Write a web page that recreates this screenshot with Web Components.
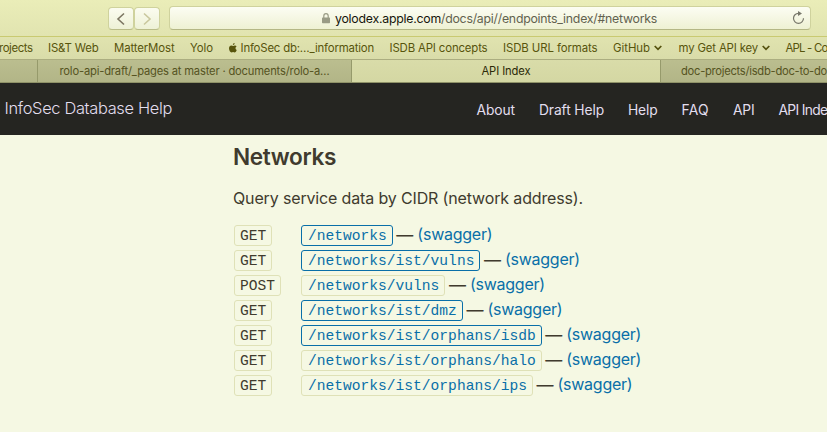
<!DOCTYPE html>
<html lang="en">
<head>
<meta charset="utf-8">
<title>API Index</title>
<style>
html,body{margin:0;height:100%;overflow:hidden;background:#f5f8e3;font-family:Inter,"Liberation Sans",sans-serif}
</style>
</head>
<body>
<help-window></help-window>
<script>
const define = (name, html, setup) => customElements.define(name, class extends HTMLElement {
  connectedCallback() {
    if (this.shadowRoot) return;
    this.attachShadow({ mode: 'open' }).innerHTML = typeof html === 'function' ? html(this) : html;
    if (setup) setup(this);
  }
});

/* Text run whose letter spacing is adjusted to fill the width given by "w". */
define('fit-text', '<style>:host{display:block;flex:none;white-space:pre}span{display:inline-block}</style><span><slot></slot></span>', el => {
  const span = el.shadowRoot.querySelector('span');
  const w = +el.getAttribute('w');
  const natural = span.getBoundingClientRect().width;
  span.style.letterSpacing = ((w - natural) / el.textContent.length) + 'px';
  el.style.width = w + 'px';
});

define('nav-button', el => `<style>
:host{display:flex;box-sizing:border-box;width:26px;height:23px;align-items:center;justify-content:center;border:1px solid #cfd29d;border-bottom-color:#b9bc88;border-radius:4px;background:linear-gradient(#fbfcf0,#eef1d6)}
</style><svg width="10" height="14" viewBox="0 0 10 14" fill="none" stroke="${el.hasAttribute('off') ? '#c9c79d' : '#7c7662'}" stroke-width="1.6"><path d="${el.hasAttribute('forward') ? 'M2 1.5 8 7 2 12.5' : 'M8 1.5 2 7 8 12.5'}"/></svg>`);

define('address-bar', `<style>
:host{display:flex;box-sizing:border-box;width:642px;height:24px;margin-left:9px;padding:0 5px 0 152px;align-items:center;border:1px solid #cfd29d;border-bottom-color:#b4b785;border-radius:4px;background:linear-gradient(#fcfdf3,#eef1d3);font-size:12.3px;color:#62624f;line-height:20px}
.host{color:#15150c}
.lock{margin-right:5px}
.reload{margin-left:auto}
fit-text{margin-top:1px}
</style>
<svg class="lock" width="8" height="11" viewBox="0 0 8 11"><path d="M1.8 5V3.1a2.2 2.4 0 0 1 4.4 0V5" fill="none" stroke="#999b85" stroke-width="1.2"/><rect y="4.6" width="8" height="5.7" rx=".7" fill="#999b85"/></svg>
<fit-text class="host" w="106">yolodex.apple.com</fit-text><fit-text w="216">/docs/api//endpoints_index/#networks</fit-text>
<svg class="reload" width="13" height="14" viewBox="0 0 13 14"><path d="M6.5 2.3A5 5 0 1 0 11.5 7.3" fill="none" stroke="#77776a" stroke-width="1.2"/><path d="M6 0v5l4-2.5z" fill="#77776a"/></svg>`);

define('tool-bar', `<style>
:host{display:flex;box-sizing:border-box;height:37px;padding:6px 0 0 108px;border-bottom:1px solid #c9ca71;background:linear-gradient(#eaedb8,#e1e4b0)}
nav-button{margin-top:1px}
</style><nav-button></nav-button><nav-button forward off></nav-button><address-bar></address-bar>`);

const chevron = '<svg width="8" height="6" viewBox="0 0 8 6" fill="none" stroke="#55520f" stroke-width="1.7"><path d="M.7 1 4 4.4 7.3 1"/></svg>';
define('bookmark-bar', `<style>
:host{display:flex;box-sizing:border-box;height:23px;align-items:center;gap:15.5px;padding-bottom:1px;overflow:hidden;border-bottom:1px solid #abad80;background:linear-gradient(#e0e3af,#d9dca9);font-size:11.4px;color:#57540c;line-height:20px}
div{display:flex;align-items:center;flex:none;gap:4px}
fit-text{padding-top:1px}
</style>
<fit-text w="33.5" style="margin-left:-1px">rojects</fit-text><fit-text w="50.5">IS&amp;T Web</fit-text><fit-text w="60.5">MatterMost</fit-text><fit-text w="23">Yolo</fit-text>
<div><svg width="8" height="10" viewBox="0 0 8 10" fill="#57540c"><path d="M5.6 0C4.5.1 3.8.9 3.9 2 5 2 5.7 1.1 5.6 0zM7.7 7.1C7.3 8.3 6.5 9.5 5.6 9.5 5 9.5 4.8 9.1 4.1 9.1S3.1 9.5 2.5 9.5C1.3 9.5 0 7.4 0 5.3 0 3.5 1.1 2.4 2.3 2.4 3.1 2.4 3.6 2.9 4.2 2.9 4.7 2.9 5.2 2.4 6 2.4 6.6 2.4 7.2 2.7 7.6 3.3 6 4.2 6.2 6.5 7.7 7.1z"/></svg><fit-text w="133.5">InfoSec db:…_information</fit-text></div>
<fit-text w="98">ISDB API concepts</fit-text><fit-text w="94.5">ISDB URL formats</fit-text>
<div><fit-text w="37">GitHub</fit-text>${chevron}</div><div style="margin-left:1px"><fit-text w="79.5">my Get API key</fit-text>${chevron}</div><fit-text w="42">APL - Co</fit-text>`);

define('tab-item', `<style>
:host{display:flex;box-sizing:border-box;justify-content:center;align-items:center;overflow:hidden;border-right:1px solid #969a6b;background:linear-gradient(#bbbe8f,#b2b587);color:#55531f}
:host([active]){background:linear-gradient(#d9dca9,#d4d7a3);color:#2c2a08}
:host([start]){justify-content:flex-start;padding-left:20px;border:0}
</style><slot></slot>`);
define('tab-strip', `<style>
:host{display:grid;box-sizing:border-box;grid-template-columns:38px 314px 309px 1fr;height:23px;border-bottom:1px solid #8f9268;font-size:11.2px;line-height:20px}
</style><tab-item></tab-item><tab-item><fit-text w="270">rolo-api-draft/_pages at master · documents/rolo-a…</fit-text></tab-item><tab-item active><fit-text w="49">API Index</fit-text></tab-item><tab-item start><fit-text w="146">doc-projects/isdb-doc-to-do</fit-text></tab-item>`);

define('site-header', `<style>
:host{display:flex;box-sizing:border-box;height:52px;padding-left:4.5px;background:#252521;color:#e2deee;overflow:hidden}
h1{margin:13px 304.5px 0 0;font-size:16.4px;font-weight:300;line-height:24px;flex:none}
nav{display:flex;gap:24px;margin-top:15px;font-size:13.8px;line-height:24px}
</style><h1><fit-text w="167.5">InfoSec Database Help</fit-text></h1>
<nav><fit-text w="38.5">About</fit-text><fit-text w="65">Draft Help</fit-text><fit-text w="29.5">Help</fit-text><fit-text w="27.5">FAQ</fit-text><fit-text w="21.5">API</fit-text><fit-text w="49">API Inde</fit-text></nav>`);

define('code-box', `<style>
:host{display:inline-flex;box-sizing:border-box;height:21px;align-items:center;padding:1px 5px 0;border:1px solid #dfe1b7;border-radius:3px;font:14.6px "Courier New","Liberation Mono",monospace;white-space:nowrap}
:host([link]){padding:1px 5px 0 6px;color:#096fa8}
:host([outlined]){border-color:#096fa8}
</style><slot></slot>`);

define('endpoint-row', el => `<style>
:host{display:grid;grid-template-columns:67px auto;height:25px;align-items:start;color:#403b2e}
.method,p{display:flex;margin:0}
a{color:#096fa8;font-size:16px;line-height:20px;margin-top:-1px}
i{font-style:normal;font-size:17px;line-height:20px;margin:0 3px 0 3.5px}
</style><span class="method"><code-box>${el.getAttribute('method')}</code-box></span>
<p><code-box link ${el.hasAttribute('outlined') ? 'outlined' : ''}>${el.getAttribute('path')}</code-box><i><fit-text w="18">—</fit-text></i><a><fit-text w="75">(swagger)</fit-text></a></p>`);

define('networks-section', `<style>
:host{display:block;padding:8px 0 0 233px;color:#403b2e}
h2{margin:0;font-size:22.6px;font-weight:600;line-height:28px}
.intro{margin:15px 0 14px;font-size:16px;line-height:25px}
section{padding-left:1px}
</style><h2><fit-text w="103">Networks</fit-text></h2><div class="intro"><fit-text w="350">Query service data by CIDR (network address).</fit-text></div>
<section>
<endpoint-row method="GET" path="/networks" outlined></endpoint-row>
<endpoint-row method="GET" path="/networks/ist/vulns" outlined></endpoint-row>
<endpoint-row method="POST" path="/networks/vulns"></endpoint-row>
<endpoint-row method="GET" path="/networks/ist/dmz" outlined></endpoint-row>
<endpoint-row method="GET" path="/networks/ist/orphans/isdb" outlined></endpoint-row>
<endpoint-row method="GET" path="/networks/ist/orphans/halo"></endpoint-row>
<endpoint-row method="GET" path="/networks/ist/orphans/ips"></endpoint-row>
</section>`);

define('help-window', `<style>:host{display:block;width:827px;height:432px;overflow:hidden}</style>
<tool-bar></tool-bar><bookmark-bar></bookmark-bar><tab-strip></tab-strip><site-header></site-header><networks-section></networks-section>`);
</script>
</body>
</html>
